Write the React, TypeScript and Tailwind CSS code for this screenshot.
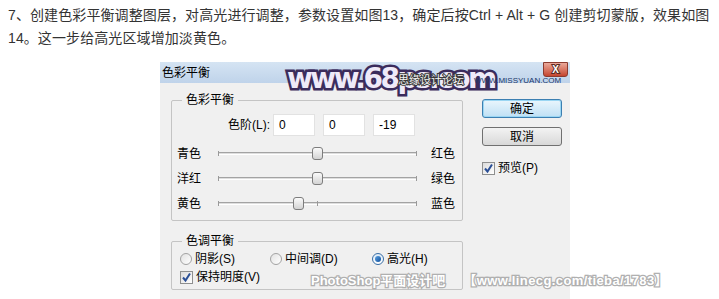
import React from "react";

const font = "font-['Liberation_Sans','Noto_Sans_CJK_SC',sans-serif]";

function Slider({ left, right, pos }: { left: string; right: string; pos: number }) {
  return (
    <div className="flex h-[25px] items-center pl-[5px]">
      <span className="w-[41px] leading-[14px]">{left}</span>
      <div className="relative h-[13px] w-[199px]">
        <div className="absolute left-0 right-0 top-[5px] h-[3px] border-t border-b border-t-[#a3a3a3] border-b-[#ffffff] bg-[#dedede]" />
        <div className="absolute left-0 top-[4px] h-[5px] w-px bg-[#9a9a9a]" />
        <div className="absolute right-0 top-[4px] h-[5px] w-px bg-[#9a9a9a]" />
        <div className="absolute left-[99px] top-[4px] h-[5px] w-px bg-[#9a9a9a]" />
        <div
          className="absolute top-0 h-[13px] w-[11px] rounded-[3px] border border-[#7d7d7d] bg-gradient-to-b from-[#fbfbfb] to-[#d3d3d3]"
          style={{ left: pos }}
        />
      </div>
      <span className="ml-[14px] leading-[14px]">{right}</span>
    </div>
  );
}

function Check() {
  return (
    <span className="flex h-[13px] w-[13px] items-center justify-center border border-[#8e8f8f] bg-gradient-to-br from-[#dcdcdc] to-[#ffffff]">
      <svg width="11" height="11" viewBox="0 0 11 11">
        <path d="M2 5.5 L4.5 8.5 L9 1.5" fill="none" stroke="#2a4f96" strokeWidth="2" />
      </svg>
    </span>
  );
}

function Radio({ on }: { on?: boolean }) {
  return (
    <span
      className={
        on
          ? "flex h-[12px] w-[12px] items-center justify-center rounded-full border border-[#3a6ea5] bg-gradient-to-b from-[#dbeaf7] to-[#ffffff]"
          : "flex h-[12px] w-[12px] items-center justify-center rounded-full border border-[#a2a2a2] bg-gradient-to-br from-[#e2e2e2] to-[#ffffff]"
      }
    >
      {on && <span className="h-[6px] w-[6px] rounded-full bg-gradient-to-br from-[#5ba0e0] to-[#0b4f9c]" />}
    </span>
  );
}

export default function App() {
  return (
    <div className={`relative h-[299px] w-[719px] overflow-hidden bg-white ${font}`}>
      <p className="px-[8px] pt-[4px] text-[14px] leading-[23px] tracking-[0.1px] text-[#333]">
        7、创建色彩平衡调整图层，对高光进行调整，参数设置如图13，确定后按Ctrl + Alt + G 创建剪切蒙版，效果如图14。这一步给高光区域增加淡黄色。
      </p>

      <div className="relative ml-[160px] mt-[12px] w-[410px] text-[12px] text-black">
        <div className="flex h-[21px] items-center bg-gradient-to-b from-[#d5e4f3] to-[#bfd3ea] pl-[2px] leading-[14px]">
          色彩平衡
        </div>

        <div className="flex h-[240px] bg-[#f0f0f0] pl-[11px] pt-[10px]">
          <div className="w-[292px]">
            <fieldset className="rounded-[2px] border border-[#c4c4c4] pb-[4px]">
              <legend className="ml-[10px] px-[4px] leading-[14px]">色彩平衡</legend>
              <div className="mt-[7px] flex h-[22px] items-center">
                <span className="w-[98px] text-right leading-[14px]">色阶(L):</span>
                <div className="ml-[3px] flex gap-[8px]">
                  {["0", "0", "-19"].map((v, i) => (
                    <input
                      key={i}
                      readOnly
                      value={v}
                      className="h-[22px] w-[42px] border border-[#e2e2e2] bg-white pl-[5px] text-[12px] outline-none"
                    />
                  ))}
                </div>
              </div>
              <div className="mt-[5px]">
                <Slider left="青色" right="红色" pos={94} />
                <Slider left="洋红" right="绿色" pos={94} />
                <Slider left="黄色" right="蓝色" pos={75} />
              </div>
            </fieldset>

            <fieldset className="mt-[13px] rounded-[2px] border border-[#c4c4c4] pb-[3px]">
              <legend className="ml-[10px] px-[4px] leading-[14px]">色调平衡</legend>
              <div className="mt-[2px] flex h-[18px] items-center pl-[8px]">
                <label className="flex w-[90px] items-center gap-[3px]">
                  <Radio />
                  <span className="leading-[14px]">阴影(S)</span>
                </label>
                <label className="flex w-[102px] items-center gap-[3px]">
                  <Radio />
                  <span className="leading-[14px]">中间调(D)</span>
                </label>
                <label className="flex items-center gap-[3px]">
                  <Radio on />
                  <span className="leading-[14px]">高光(H)</span>
                </label>
              </div>
              <div className="flex h-[18px] items-center gap-[3px] pl-[8px]">
                <Check />
                <span className="leading-[14px]">保持明度(V)</span>
              </div>
            </fieldset>
          </div>

          <div className="ml-[19px] mt-[6px] flex w-[80px] flex-col">
            <button className="h-[19px] rounded-[3px] border border-[#3c7fb1] bg-gradient-to-b from-[#eaf6fd] to-[#bfe0f4] text-[12px] leading-[14px] shadow-[inset_0_0_0_1px_#9ad6f3]">
              确定
            </button>
            <button className="mt-[9px] h-[19px] rounded-[3px] border border-[#707070] bg-gradient-to-b from-[#f3f3f3] to-[#d8d8d8] text-[12px] leading-[14px]">
              取消
            </button>
            <div className="mt-[15px] flex items-center gap-[3px]">
              <Check />
              <span className="leading-[14px]">预览(P)</span>
            </div>
          </div>
        </div>

        <span className="absolute left-[127px] top-[3px] font-['DejaVu_Sans',sans-serif] text-[28px] font-bold leading-[28px] tracking-[-2.5px] text-[#efeaf8] [-webkit-text-stroke:5px_#3b2c5c] [paint-order:stroke_fill]">
          www.68ps.com
        </span>
        <span className="absolute left-[238px] top-[12px] text-[11px] leading-[12px] text-[#f4f4f4] [-webkit-text-stroke:2px_#3a3a3a] [paint-order:stroke_fill]">
          思缘设计论坛
        </span>
        <span className="absolute left-[314px] top-[14px] text-[8px] leading-[9px] text-[#22386a]">
          WWW.MISSYUAN.COM
        </span>
        <span className="absolute right-[2px] top-0 flex h-[15px] w-[25px] items-center justify-center rounded-b-[3px] border border-[#8b3b2f] bg-gradient-to-b from-[#e9a89a] to-[#c4442e] text-[10px] font-bold leading-[10px] text-white [-webkit-text-stroke:2px_#5a2a22] [paint-order:stroke_fill]">
          X
        </span>
      </div>

      <div className="absolute left-[311px] top-[273px] flex text-[13px] font-bold leading-[16px] text-white [-webkit-text-stroke:2.5px_#b0b0b0] [paint-order:stroke_fill]">
        <span>PhotoShop平面设计吧</span>
        <span className="ml-[18px] tracking-[0.4px]">【www.linecg.com/tieba/1783】</span>
      </div>
    </div>
  );
}
